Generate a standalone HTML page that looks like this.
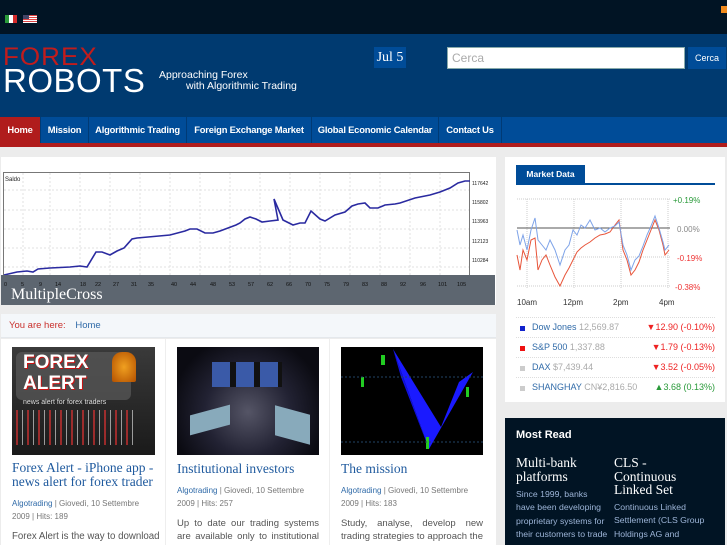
<!DOCTYPE html>
<html><head><meta charset="utf-8"><style>
*{margin:0;padding:0;box-sizing:border-box}
body{width:727px;height:545px;overflow:hidden;background:#ececec;font-family:"Liberation Sans",sans-serif;position:relative}
.a{position:absolute}
.nav div{text-align:center;border-right:1px solid #003a75;white-space:nowrap;overflow:hidden}
</style></head><body>
<div class="a" style="left:0;top:0;width:727px;height:34px;background:#011424"></div>
<div class="a" style="left:5px;top:15px;width:4px;height:8px;background:#2a9a3a"></div>
<div class="a" style="left:9px;top:15px;width:4px;height:8px;background:#fff"></div>
<div class="a" style="left:13px;top:15px;width:4px;height:8px;background:#d42a2a"></div>
<div class="a" style="left:23px;top:15px;width:14px;height:8px;background:repeating-linear-gradient(#d44 0 1px,#fff 1px 2px)"></div>
<div class="a" style="left:23px;top:15px;width:6px;height:4px;background:#446"></div>
<div class="a" style="left:721px;top:6px;width:6px;height:7px;background:#f08a1c"></div>
<div class="a" style="left:0;top:34px;width:727px;height:83px;background:#003a70"></div>
<div class="a" style="left:3px;top:45px;color:#c11c1c;font-size:25px;line-height:25px;letter-spacing:1px;transform:scaleX(1.04);transform-origin:left">FOREX</div>
<div class="a" style="left:3px;top:64px;color:#fff;font-size:33px;line-height:33px;letter-spacing:0.5px">ROBOTS</div>
<div class="a" style="left:159px;top:70px;color:#fff;font-size:10.5px;line-height:11px">Approaching Forex<br><span style="padding-left:27px">with Algorithmic Trading</span></div>
<div class="a" style="left:374px;top:47px;width:32px;height:21px;background:#004c98;color:#fff;font-family:'Liberation Serif',serif;font-size:14px;text-align:center;line-height:21px">Jul 5</div>
<div class="a" style="left:447px;top:47px;width:238px;height:22px;background:#fff;border:1px solid #8aa;color:#aaa;font-size:12px;padding:3px 4px">Cerca</div>
<div class="a" style="left:688px;top:47px;width:38px;height:22px;background:#004c98;color:#fff;font-size:9px;text-align:center;line-height:22px">Cerca</div>
<div class="a nav" style="left:0;top:117px;width:727px;height:26px;background:#004c98;display:flex;font-size:9.4px;font-weight:bold;color:#fff;line-height:26px;letter-spacing:-0.2px">
<div style="background:#b01c1c;width:41px">Home</div>
<div style="width:48px">Mission</div>
<div style="width:98px">Algorithmic Trading</div>
<div style="width:125px">Foreign Exchange Market</div>
<div style="width:127px">Global Economic Calendar</div>
<div style="width:63px">Contact Us</div>
</div>
<div class="a" style="left:0;top:143px;width:727px;height:4px;background:#b01c1c"></div>
<div class="a" style="left:1px;top:157px;width:495px;height:148px;background:#fff"></div>
<svg class="a" style="left:0;top:157px" width="497" height="148">
<rect x="3.5" y="15.5" width="466" height="112" fill="#fff" stroke="#777"/>
<g stroke="#e2e2e2" stroke-dasharray="2,2">
<line x1="4" y1="33" x2="469" y2="33"/><line x1="4" y1="53" x2="469" y2="53"/><line x1="4" y1="72" x2="469" y2="72"/><line x1="4" y1="91" x2="469" y2="91"/><line x1="4" y1="110" x2="469" y2="110"/>
<line x1="23" y1="16" x2="23" y2="127"/><line x1="50" y1="16" x2="50" y2="127"/><line x1="80" y1="16" x2="80" y2="127"/><line x1="110" y1="16" x2="110" y2="127"/><line x1="140" y1="16" x2="140" y2="127"/><line x1="170" y1="16" x2="170" y2="127"/><line x1="200" y1="16" x2="200" y2="127"/><line x1="230" y1="16" x2="230" y2="127"/><line x1="260" y1="16" x2="260" y2="127"/><line x1="290" y1="16" x2="290" y2="127"/><line x1="320" y1="16" x2="320" y2="127"/><line x1="350" y1="16" x2="350" y2="127"/><line x1="380" y1="16" x2="380" y2="127"/><line x1="410" y1="16" x2="410" y2="127"/><line x1="440" y1="16" x2="440" y2="127"/>
</g>
<text x="5" y="24" font-size="6" fill="#222" font-family="Liberation Sans">Saldo</text>
<polyline fill="none" stroke="#2a2aa0" stroke-width="1.6" points="4,118 17,115 27,114 33,115 38,112 50,111 70,110 80,109 87,110 96,95 102,95 110,98 117,94 124,91 132,82 137,81 170,78 185,74 190,72 197,72 205,76 213,76 220,74 228,71 236,68 240,66 245,62 250,60 256,62 262,65 270,64 278,63 274,42 283,63 293,68 300,66 305,66 311,54 320,62 325,64 335,58 345,55 352,49 358,47 365,46 370,51 378,51 385,48 395,47 400,46 415,41 430,38 440,35 450,31 458,26 465,24 470,24"/>
<g font-size="5" fill="#222" font-family="Liberation Sans"><text x="472" y="28">117642</text><text x="472" y="47">115802</text><text x="472" y="66">113963</text><text x="472" y="86">112123</text><text x="472" y="105">110284</text><text x="472" y="124">108445</text></g>
<rect x="1" y="118" width="494" height="30" fill="#5d6670"/>
<g font-size="5.5" fill="#111" font-family="Liberation Sans"><text x="4" y="129">0</text><text x="21" y="129">5</text><text x="39" y="129">9</text><text x="55" y="129">14</text><text x="80" y="129">18</text><text x="95" y="129">22</text><text x="113" y="129">27</text><text x="131" y="129">31</text><text x="148" y="129">35</text><text x="171" y="129">40</text><text x="190" y="129">44</text><text x="210" y="129">48</text><text x="229" y="129">53</text><text x="248" y="129">57</text><text x="267" y="129">62</text><text x="286" y="129">66</text><text x="305" y="129">70</text><text x="324" y="129">75</text><text x="343" y="129">79</text><text x="362" y="129">83</text><text x="381" y="129">88</text><text x="400" y="129">92</text><text x="420" y="129">96</text><text x="438" y="129">101</text><text x="457" y="129">105</text></g>
<text x="11" y="142" font-size="16" fill="#fff" font-family="Liberation Serif">MultipleCross</text>
</svg>
<div class="a" style="left:1px;top:314px;width:495px;height:24px;background:#f4f7fa;border-bottom:1px solid #e4e8ec;font-size:9.5px;line-height:24px;padding-left:8px"><span style="color:#c9302c">You are here:</span> <span style="color:#2f6aa8;margin-left:7px">Home</span></div>
<div class="a" style="left:1px;top:339px;width:495px;height:206px;background:#fff"></div>
<div class="a" style="left:165px;top:339px;width:1px;height:206px;background:#eee"></div>
<div class="a" style="left:329px;top:339px;width:1px;height:206px;background:#eee"></div>
<div class="a" style="left:12px;top:347px;width:143px;height:108px;background:linear-gradient(#3a3a3a,#1a1a1a)"></div>
<div class="a" style="left:16px;top:352px;width:115px;height:48px;background:#555;border-radius:6px;opacity:.8"></div>
<div class="a" style="left:23px;top:352px;color:#fff;font-weight:bold;font-size:19px;line-height:21px;text-shadow:1px 1px 0 #c11">FOREX<br>ALERT</div>
<div class="a" style="left:112px;top:352px;width:24px;height:30px;background:radial-gradient(#f0a020,#b35000);border-radius:10px 10px 2px 2px"></div>
<div class="a" style="left:23px;top:399px;color:#ddd;font-size:7px">news alert for forex traders</div>
<div class="a" style="left:16px;top:410px;width:120px;height:35px;background:repeating-linear-gradient(90deg,#e33 0 2px,transparent 2px 6px,#eee 6px 7px,transparent 7px 11px);opacity:.6"></div>
<div class="a" style="left:177px;top:347px;width:142px;height:108px;background:radial-gradient(circle at 50% 60%,#556 0,#223 45%,#0b0b12 80%)"></div>
<div class="a" style="left:212px;top:362px;width:70px;height:25px;background:repeating-linear-gradient(90deg,#3a5aa8 0 18px,#111 18px 24px)"></div>
<div class="a" style="left:190px;top:410px;width:40px;height:20px;background:#8ab;transform:skewY(-15deg)"></div>
<div class="a" style="left:275px;top:410px;width:35px;height:30px;background:#8ab;transform:skewY(15deg)"></div>
<div class="a" style="left:341px;top:347px;width:142px;height:108px;background:#000"></div>
<svg class="a" style="left:341px;top:347px" width="142" height="108"><polygon points="52,2 88,102 132,25 118,35 100,80" fill="#1a1aff"/><polygon points="52,2 60,30 88,102" fill="#1010e0"/><g fill="#2c2"><rect x="40" y="8" width="4" height="10"/><rect x="20" y="30" width="3" height="10"/><rect x="85" y="90" width="3" height="12"/><rect x="125" y="40" width="3" height="10"/></g><line x1="0" y1="30" x2="142" y2="30" stroke="#246" stroke-dasharray="2,2"/><line x1="0" y1="95" x2="142" y2="95" stroke="#246" stroke-dasharray="2,2"/></svg>
<div class="a" style="left:12px;top:461px;width:150px;color:#1f5a9e;font-family:'Liberation Serif',serif;font-size:13.5px;line-height:14px">Forex Alert - iPhone app - news alert for forex trader</div>
<div class="a" style="left:177px;top:461px;color:#1f5a9e;font-family:'Liberation Serif',serif;font-size:13.5px">Institutional investors</div>
<div class="a" style="left:341px;top:461px;color:#1f5a9e;font-family:'Liberation Serif',serif;font-size:13.5px">The mission</div>
<div class="a" style="left:12px;top:497px;width:140px;color:#777;font-size:8px;line-height:13px"><span style="color:#2f6aa8">Algotrading</span> | Giovedì, 10 Settembre 2009 | Hits: 189</div>
<div class="a" style="left:177px;top:484px;width:140px;color:#777;font-size:8px;line-height:13px"><span style="color:#2f6aa8">Algotrading</span> | Giovedì, 10 Settembre 2009 | Hits: 257</div>
<div class="a" style="left:341px;top:484px;width:140px;color:#777;font-size:8px;line-height:13px"><span style="color:#2f6aa8">Algotrading</span> | Giovedì, 10 Settembre 2009 | Hits: 183</div>
<div class="a" style="left:12px;top:530px;width:144px;color:#555;font-size:9.7px;line-height:13px;white-space:nowrap">Forex Alert is the way to download</div>
<div class="a" style="left:177px;top:517px;width:142px;color:#555;font-size:9.5px;line-height:13px;text-align:justify;text-align-last:justify">Up to date our trading systems are available only to institutional</div>
<div class="a" style="left:341px;top:517px;width:142px;color:#555;font-size:9.5px;line-height:13px;text-align:justify;text-align-last:justify">Study, analyse, develop new trading strategies to approach the</div>
<div class="a" style="left:505px;top:157px;width:220px;height:245px;background:#fff"></div>
<div class="a" style="left:516px;top:165px;width:69px;height:19px;background:#004c98;color:#fff;font-size:8.5px;font-weight:bold;line-height:19px;text-align:center">Market Data</div>
<div class="a" style="left:516px;top:183px;width:199px;height:2px;background:#004c98"></div>
<svg class="a" style="left:505px;top:190px" width="222" height="120">
<g stroke="#ccc" stroke-dasharray="1,1"><line x1="12" y1="9" x2="165" y2="9"/><line x1="12" y1="67" x2="165" y2="67"/><line x1="12" y1="96" x2="165" y2="96"/><line x1="22" y1="9" x2="22" y2="98"/><line x1="69" y1="9" x2="69" y2="98"/><line x1="116" y1="9" x2="116" y2="98"/><line x1="163" y1="9" x2="163" y2="98"/></g>
<line x1="12" y1="38" x2="165" y2="38" stroke="#555"/>
<polyline fill="none" stroke="#e8553a" stroke-width="1" points="12,65 15,80 18,60 22,70 26,50 30,48 33,80 37,70 41,65 45,75 50,87 55,96 60,85 64,78 68,70 72,62 76,58 80,55 85,52 90,48 95,45 100,44 105,42 110,35 114,30 118,60 122,70 126,85 130,80 134,72 138,60 142,50 146,40 150,30 154,40 158,55 160,65 164,60"/>
<polyline fill="none" stroke="#7ea3e8" stroke-width="1" points="12,40 15,55 18,45 22,60 26,40 30,28 33,50 37,55 41,60 45,50 50,60 55,75 60,60 64,55 68,40 72,45 76,35 80,38 85,30 90,40 95,38 100,42 105,38 110,36 114,32 118,55 122,65 126,80 130,70 134,66 138,56 142,45 146,36 150,26 154,38 158,52 160,60 164,55"/>
<g font-size="8" font-family="Liberation Sans"><text x="168" y="13" fill="#2a9a3a">+0.19%</text><text x="172" y="42" fill="#888">0.00%</text><text x="172" y="71" fill="#e33">-0.19%</text><text x="170" y="100" fill="#e33">-0.38%</text>
<text x="12" y="115" fill="#333">10am</text><text x="58" y="115" fill="#333">12pm</text><text x="108" y="115" fill="#333">2pm</text><text x="154" y="115" fill="#333">4pm</text></g>
</svg>
<div class="a" style="left:516px;top:317px;width:199px;font-size:9px;line-height:19px">
<div style="border-top:1px dotted #ddd;position:relative;padding-left:16px"><span style="position:absolute;left:4px;top:8px;width:5px;height:5px;background:#12c"></span><span style="color:#2f6aa8">Dow Jones</span> <span style="color:#aaa">12,569.87</span><span style="float:right;color:#e22">▼12.90 (-0.10%)</span></div>
<div style="border-top:1px dotted #ddd;position:relative;padding-left:16px"><span style="position:absolute;left:4px;top:8px;width:5px;height:5px;background:#e11"></span><span style="color:#2f6aa8">S&amp;P 500</span> <span style="color:#aaa">1,337.88</span><span style="float:right;color:#e22">▼1.79 (-0.13%)</span></div>
<div style="border-top:1px dotted #ddd;position:relative;padding-left:16px"><span style="position:absolute;left:4px;top:8px;width:5px;height:5px;background:#ccc"></span><span style="color:#2f6aa8">DAX</span> <span style="color:#aaa">$7,439.44</span><span style="float:right;color:#e22">▼3.52 (-0.05%)</span></div>
<div style="border-top:1px dotted #ddd;position:relative;padding-left:16px"><span style="position:absolute;left:4px;top:8px;width:5px;height:5px;background:#ccc"></span><span style="color:#2f6aa8">SHANGHAY</span> <span style="color:#aaa">CN¥2,816.50</span><span style="float:right;color:#2a9a3a">▲3.68 (0.13%)</span></div>
</div>
<div class="a" style="left:505px;top:418px;width:220px;height:127px;background:#011424"></div>
<div class="a" style="left:516px;top:429px;color:#fff;font-size:11px;font-weight:bold">Most Read</div>
<div class="a" style="left:516px;top:456px;width:95px;color:#fff;font-family:'Liberation Serif',serif;font-size:13.5px;line-height:13.5px">Multi-bank<br>platforms</div>
<div class="a" style="left:614px;top:456px;width:100px;color:#fff;font-family:'Liberation Serif',serif;font-size:13.5px;line-height:13.5px">CLS -<br>Continuous<br>Linked Set</div>
<div class="a" style="left:516px;top:488px;width:98px;color:#9db5d8;font-size:8.7px;line-height:13.4px;white-space:nowrap">Since 1999, banks<br>have been developing<br>proprietary systems for<br>their customers to trade</div>
<div class="a" style="left:614px;top:501px;width:112px;color:#9db5d8;font-size:8.7px;line-height:13.4px;white-space:nowrap">Continuous Linked<br>Settlement (CLS Group<br>Holdings AG and</div>
</body></html>
